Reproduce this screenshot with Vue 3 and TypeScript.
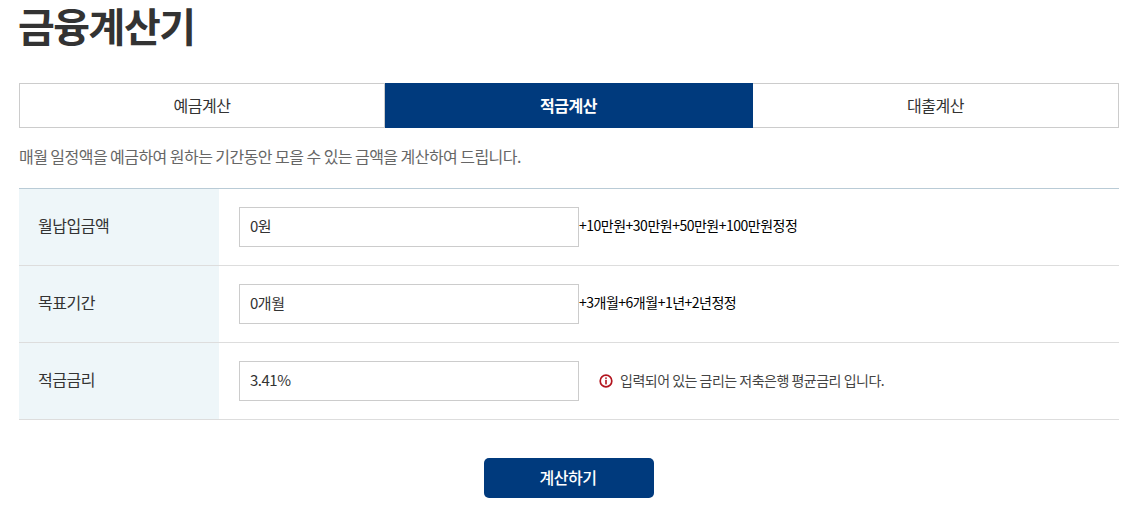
<script setup lang="ts">
// 금융계산기 - 적금계산 탭
interface Row {
    label: string;
    value: string;
    chips?: string[];
    note?: string;
}

const tabs = ['예금계산', '적금계산', '대출계산'];
const activeTab = 1;

const rows: Row[] = [
    { label: '월납입금액', value: '0원', chips: ['+10만원', '+30만원', '+50만원', '+100만원', '정정'] },
    { label: '목표기간', value: '0개월', chips: ['+3개월', '+6개월', '+1년', '+2년', '정정'] },
    { label: '적금금리', value: '3.41%', note: '입력되어 있는 금리는 저축은행 평균금리 입니다.' },
];
</script>

<template>
    <main class="page">
        <h1 class="title">금융계산기</h1>

        <div class="tabs">
            <a
                v-for="(tab, i) in tabs"
                :key="tab"
                class="tab"
                :class="{ active: i === activeTab }"
            >{{ tab }}</a>
        </div>

        <p class="desc">매월 일정액을 예금하여 원하는 기간동안 모을 수 있는 금액을 계산하여 드립니다.</p>

        <div class="form">
            <div v-for="row in rows" :key="row.label" class="row">
                <div class="label">{{ row.label }}</div>
                <div class="field">
                    <input class="input" type="text" :value="row.value" />
                    <div v-if="row.chips" class="chips">
                        <button v-for="(chip, i) in row.chips" :key="i" class="chip" type="button">{{ chip }}</button>
                    </div>
                    <p v-if="row.note" class="note">
                        <svg class="note-icon" width="14" height="14" viewBox="0 0 14 14" aria-hidden="true">
                            <circle cx="7" cy="7" r="5.8" fill="none" stroke="#b3151f" stroke-width="1.7" />
                            <rect x="6.2" y="3.4" width="1.6" height="1.5" fill="#b3151f" />
                            <rect x="6.2" y="5.8" width="1.6" height="4.6" fill="#b3151f" />
                        </svg>
                        <span class="note-text">{{ row.note }}</span>
                    </p>
                </div>
            </div>
        </div>

        <div class="actions">
            <button class="submit" type="button">계산하기</button>
        </div>
    </main>
</template>

<style scoped>
.page {
    width: 1100px;
    margin-left: 19px;
    font-family: "Noto Sans CJK KR", "Noto Sans", sans-serif;
    color: #333;
}
.title {
    margin: 0 0 0 -1px;
    height: 83px;
    font-size: 40px;
    line-height: 50px;
    font-weight: 700;
    letter-spacing: -1.5px;
    color: #333;
}
.tabs {
    display: flex;
    height: 45px;
}
.tab {
    flex: 0 0 366px;
    display: flex;
    align-items: center;
    justify-content: center;
    box-sizing: border-box;
    padding-bottom: 1px;
    border: 1px solid #ccc;
    font-size: 16px;
    letter-spacing: -0.5px;
    color: #333;
}
.tab + .tab {
    border-left: 0;
}
.tab.active {
    background: #003a7d;
    border-color: #003a7d;
    color: #fff;
    font-weight: 700;
    flex: 0 0 368px;
}
.desc {
    margin: 0;
    height: 60px;
    padding-top: 16px;
    box-sizing: border-box;
    font-size: 16px;
    line-height: 24px;
    letter-spacing: -0.55px;
    color: #666;
}
.form {
    border-top: 1px solid #b9cbd6;
}
.row {
    display: flex;
    height: 77px;
    box-sizing: border-box;
    border-bottom: 1px solid #ddd;
}
.label {
    flex: 0 0 200px;
    box-sizing: border-box;
    padding: 0 0 5px 19px;
    display: flex;
    align-items: center;
    background: #eef6f9;
    font-size: 16px;
    letter-spacing: -0.5px;
    color: #333;
}
.field {
    flex: 1;
    display: flex;
    align-items: center;
    padding-left: 20px;
}
.input {
    width: 340px;
    height: 40px;
    box-sizing: border-box;
    padding: 0 10px 3px;
    border: 1px solid #ccc;
    border-radius: 0;
    outline: 0;
    background: #fff;
    font-family: inherit;
    font-size: 15px;
    letter-spacing: -0.5px;
    color: #333;
}
.chips {
    display: flex;
    margin-bottom: 5px;
}
.chip {
    padding: 0;
    border: 0;
    background: none;
    font-family: inherit;
    font-size: 14px;
    letter-spacing: -0.5px;
    color: #000;
}
.note {
    display: flex;
    align-items: center;
    gap: 7px;
    margin: 0 0 0 20px;
    font-size: 14px;
    letter-spacing: -0.5px;
    color: #444;
}
.note-icon {
    flex: none;
}
.note-text {
    margin-bottom: 2px;
}
.actions {
    display: flex;
    justify-content: center;
    padding-top: 38px;
}
.submit {
    width: 170px;
    height: 40px;
    padding: 0 2px 2px 0;
    border: 0;
    border-radius: 5px;
    background: #003a7d;
    color: #fff;
    font-family: inherit;
    font-size: 16px;
    font-weight: 500;
    letter-spacing: -0.5px;
}
</style>

<style>
body {
    background: #fff;
    overflow: hidden;
}
</style>
